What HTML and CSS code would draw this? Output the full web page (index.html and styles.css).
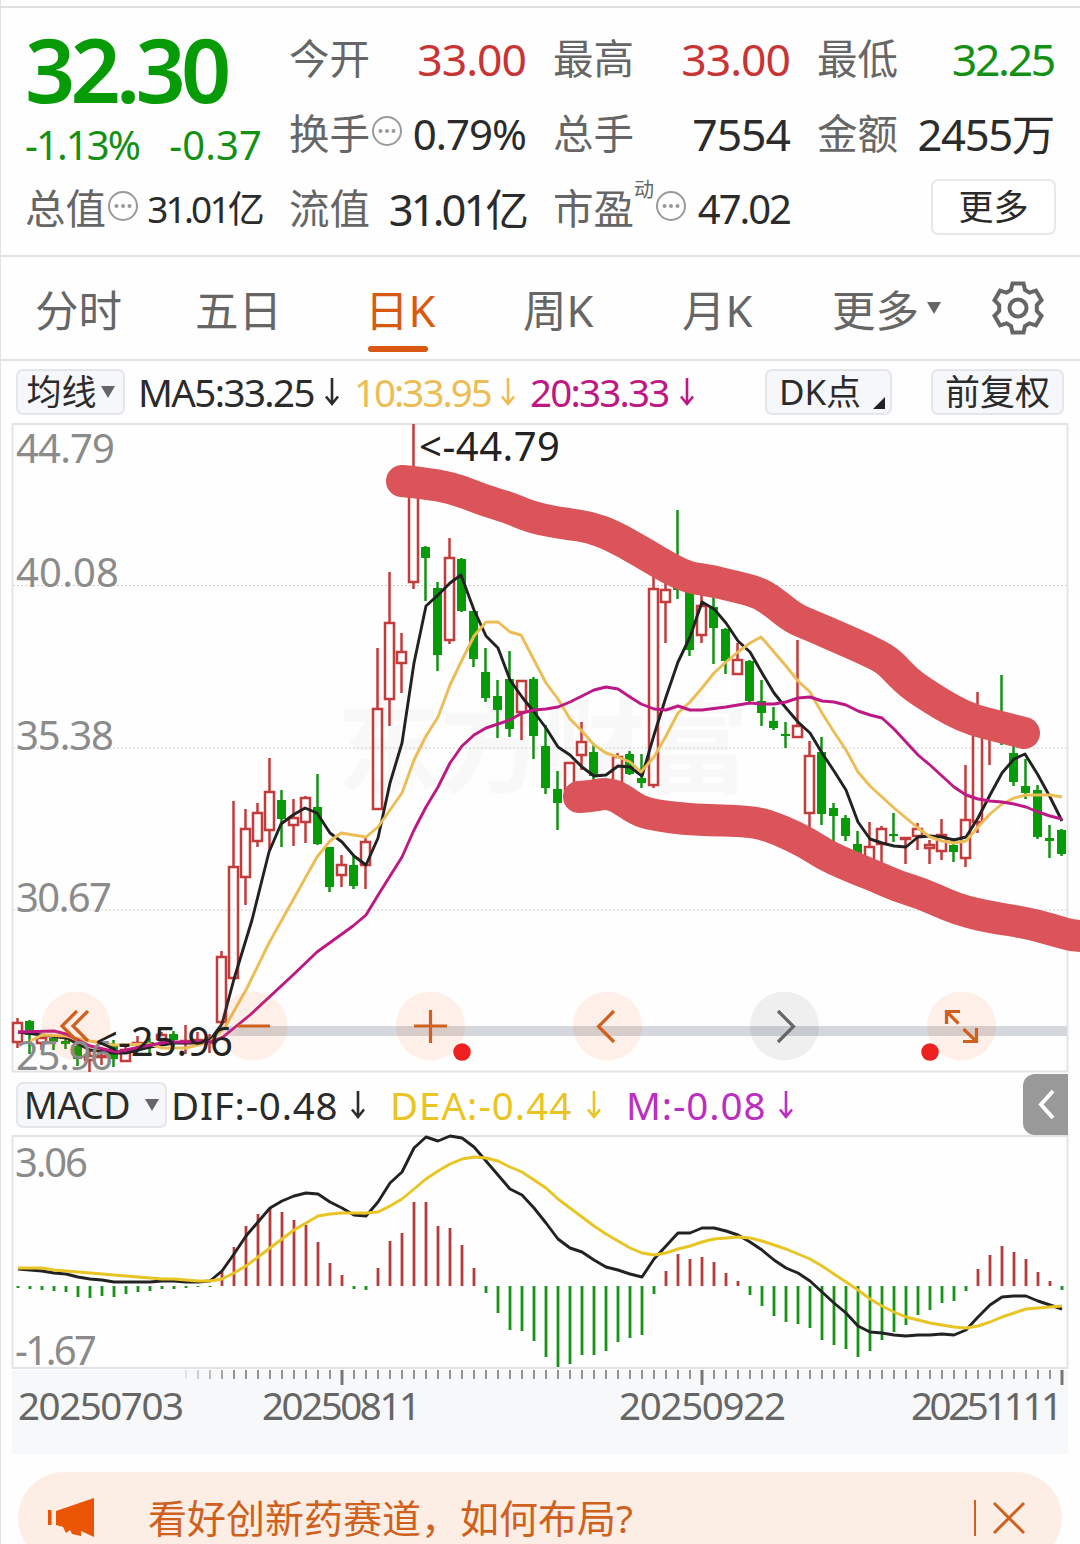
FILE: index.html
```
<!DOCTYPE html>
<html lang="zh-CN">
<head>
    <meta charset="UTF-8">
    <title>日K</title>
    <link rel="stylesheet" href="styles.css">
</head>
<body>
    <svg class="defs">
        <symbol id="dots" viewBox="0 0 32 32">
            <circle cx="16" cy="16" r="14" fill="none" stroke="#9a9a9a" stroke-width="2"/>
            <g fill="#999"><circle cx="9.5" cy="16" r="2"/><circle cx="16" cy="16" r="2"/><circle cx="22.5" cy="16" r="2"/></g>
        </symbol>
        <symbol id="down" viewBox="0 0 16 30">
            <path d="M8 1V27M2 19.5L8 27L14 19.5" fill="none" stroke="currentColor" stroke-width="2.6"/>
        </symbol>
    </svg>

    <div class="quote">
        <div class="main">
            <div class="price">32.30</div>
            <div class="change"><span>-1.13%</span><span class="diff">-0.37</span></div>
            <div class="cell"><label>总值</label><svg class="dots"><use href="#dots"/></svg><b class="small">31.01亿</b></div>
        </div>
        <div class="cell"><label>今开</label><b class="up">33.00</b></div>
        <div class="cell"><label>最高</label><b class="up">33.00</b></div>
        <div class="cell"><label>最低</label><b class="down">32.25</b></div>
        <div class="cell"><label>换手</label><svg class="dots"><use href="#dots"/></svg><b class="rate">0.79%</b></div>
        <div class="cell"><label>总手</label><b>7554</b></div>
        <div class="cell"><label>金额</label><b class="amount">2455万</b></div>
        <div class="cell"><label>流值</label><b class="float">31.01亿</b></div>
        <div class="cell"><label>市盈</label><sup>动</sup><svg class="dots"><use href="#dots"/></svg><b class="pe">47.02</b></div>
        <div class="cell end"><button class="more">更多</button></div>
    </div>

    <div class="tabs">
        <span>分时</span>
        <span>五日</span>
        <span class="active">日K</span>
        <span>周K</span>
        <span>月K</span>
        <span>更多<i class="caret"></i></span>
        <svg class="gear" viewBox="0 0 54 54">
            <path d="M21.500 2.500h11l1.500 6.500l4.500 2.700l6.500-2l5.500 9.500l-4.700 4.800v6l4.700 4.800l-5.500 9.500l-6.500-2l-4.500 2.700l-1.500 6.500h-11l-1.500-6.500l-4.500-2.700l-6.500 2l-5.500-9.500l4.700-4.800v-6l-4.700-4.800l5.500-9.500l6.500 2l4.500-2.700z"/>
            <circle cx="27" cy="27" r="8.500"/>
        </svg>
    </div>

    <div class="indicators">
        <button class="tag ma">均线<i class="caret"></i></button>
        <span class="ma5">MA5:33.25</span><svg class="arrow"><use href="#down"/></svg>
        <span class="ma10">10:33.95</span><svg class="arrow c10"><use href="#down"/></svg>
        <span class="ma20">20:33.33</span><svg class="arrow c20"><use href="#down"/></svg>
        <button class="tag dk">DK点<i class="corner"></i></button>
        <button class="tag fq">前复权</button>
    </div>

    <svg class="kline" viewBox="0 420 1080 656">
        <text x="337" y="785" class="watermark" textLength="412">东方财富</text>
        <path class="grid" d="M13 585.500H1067M13 748H1067M13 910H1067"/>
        <path class="frame" d="M12.500 424H1067.500V1071.500H12.500Z"/>
        <defs>
            <linearGradient id="fade"><stop offset="0" stop-color="#d4d7dc" stop-opacity="0"/><stop offset="0.04" stop-color="#d4d7dc"/></linearGradient>
        </defs>
        <rect x="205" y="1026" width="862" height="10" fill="url(#fade)"/>
        <g id="candles"></g>
        <g id="averages"></g>
        <g class="controls">
            <circle cx="76" cy="1026" r="34.500"/>
            <circle cx="253" cy="1026" r="34.500"/>
            <circle cx="430.500" cy="1026" r="34.500"/>
            <circle cx="607.500" cy="1026" r="34.500"/>
            <circle cx="784.500" cy="1026" r="34.500" class="off"/>
            <circle cx="961.500" cy="1026" r="34.500"/>
            <path d="M77 1011L62 1026L77 1041M88 1011L73 1026L88 1041"/>
            <path d="M238 1026H270M414 1026H447M430.500 1010V1043"/>
            <path d="M614 1011L598.500 1026.500L614 1042"/>
            <path class="gray" d="M778 1011L793.500 1026.500L778 1042"/>
            <path d="M946.500 1024V1011.500H960M947 1012L958.500 1023.500M963 1041.500H976.500V1028M976 1041L963.500 1029"/>
        </g>
        <circle cx="462" cy="1052" r="8.800" fill="#ef2020"/>
        <circle cx="930" cy="1052" r="8.800" fill="#ef2020"/>
        <g class="axis">
            <text x="16" y="463" textLength="99">44.79</text>
            <text x="16" y="587" textLength="103">40.08</text>
            <text x="16" y="750" textLength="98">35.38</text>
            <text x="16" y="912" textLength="96">30.67</text>
            <text x="16" y="1070" textLength="97">25.96</text>
        </g>
        <g class="mark">
            <text x="419" y="461" textLength="141">&lt;-44.79</text>
            <text x="95" y="1056" textLength="138">&lt;-25.96</text>
        </g>
        <g id="brush"></g>
    </svg>

    <div class="indicators macd-bar">
        <button class="tag macd">MACD<i class="caret"></i></button>
        <span class="dif">DIF:-0.48</span><svg class="arrow"><use href="#down"/></svg>
        <span class="dea">DEA:-0.44</span><svg class="arrow cdea"><use href="#down"/></svg>
        <span class="m">M:-0.08</span><svg class="arrow cm"><use href="#down"/></svg>
        <div class="fold"><svg viewBox="0 0 45 61"><path d="M30 17L18 30.500L30 44"/></svg></div>
    </div>

    <svg class="macd-chart" viewBox="0 1134 1080 236">
        <path class="frame" d="M12.500 1136H1067.500V1368H12.500Z"/>
        <g class="axis">
            <text x="15" y="1177" textLength="73">3.06</text>
            <text x="15" y="1365" textLength="82">-1.67</text>
        </g>
        <g id="macd"></g>
    </svg>

    <div class="dates">
        <svg viewBox="12 1370 1056 84">
            <g id="ticks"></g>
            <text x="18" y="1420" textLength="166">20250703</text>
            <text x="262" y="1420" textLength="159">20250811</text>
            <text x="619" y="1420" textLength="167">20250922</text>
            <text x="911" y="1420" textLength="152">20251111</text>
        </svg>
    </div>

    <div class="notice">
        <svg class="horn" viewBox="0 0 48 42"><path d="M0 13h3.500v15H0zM8 14L46 1V40L33 34V39L24 37L22 33L18 36L15 30L8 28Z"/></svg>
        <p>看好创新药赛道，如何布局?</p>
        <i class="bar"></i>
        <svg class="close" viewBox="0 0 32 32"><path d="M1 1L31 31M31 1L1 31"/></svg>
    </div>

    <script>
        // one row per day: up(1)/down(0), high, body top, body bottom, low
        const days = [
            [1,1018,1023,1042,1048],[0,1020,1021,1035,1054],[1,1037,1038,1043,1050],[0,1036,1038,1042,1050],
            [0,1037,1041,1044,1049],[0,1044,1046,1059,1066],[1,1050,1056,1060,1072],[1,1053,1056,1057,1065],
            [0,1040,1044,1059,1067],[1,1046,1050,1061,1061],[1,1036,1043,1044,1050],[0,1038,1042,1048,1053],
            [1,1032,1035,1039,1045],[0,1031,1034,1040,1047],[1,1025,1041,1043,1054],[1,1032,1040,1042,1046],
            [1,1034,1041,1043,1053],[1,951,957,1022,1024],[1,801,867,978,979],[1,809,829,877,905],
            [1,803,813,841,847],[1,758,792,830,850],[0,790,800,819,847],[1,799,818,825,846],
            [1,796,798,822,843],[0,774,807,844,845],[0,847,847,887,892],[1,855,865,875,887],
            [0,855,865,886,889],[1,838,842,865,889],[1,648,709,809,809],[1,572,623,699,726],
            [1,633,652,663,693],[1,424,480,582,589],[0,546,547,558,601],[0,582,588,655,671],
            [1,538,558,640,644],[0,558,559,611,612],[0,611,611,659,667],[0,648,672,698,702],
            [0,680,696,710,738],[0,651,679,729,737],[1,681,681,712,740],[0,677,679,736,759],
            [0,725,746,788,794],[0,771,789,803,830],[1,763,763,795,795],[1,722,742,755,770],
            [0,743,752,776,780],[1,785,788,790,792],[1,753,757,785,790],[0,751,754,774,775],
            [0,754,778,783,788],[1,575,589,785,788],[1,583,590,602,643],[0,510,575,590,599],
            [0,585,588,650,656],[1,595,606,635,643],[0,596,607,628,664],[0,628,629,661,674],
            [1,643,660,674,675],[0,660,661,701,702],[0,680,701,713,726],[0,707,721,728,730],
            [0,722,734,736,748],[1,640,726,737,737],[1,741,756,813,830],[0,737,752,814,825],
            [0,803,808,816,845],[0,815,818,836,841],[0,831,844,856,858],[1,822,847,862,866],
            [1,826,829,844,864],[0,813,834,836,842],[1,838,838,839,864],[1,823,829,836,850],
            [1,840,845,848,864],[1,819,835,851,860],[0,838,845,852,862],[1,765,820,858,867],
            [1,692,735,822,833],[1,720,725,735,765],[0,675,720,740,745],[0,746,753,782,786],
            [0,759,786,793,799],[0,785,790,837,839],[0,825,838,841,858],[0,829,830,854,856]
        ];

        const ma5 = '18,1032 42,1035 66,1038 78,1044 90,1050 114,1053 126,1053 138,1050 150,1047 174,1043 198,1043 210,1040 222,1024 234,979 252,920 269,852 281,824 293,815 305,808 317,813 330,833 342,842 354,856 366,865 378,838 390,783 402,743 414,663 426,606 438,595 450,583 461,575 474,610 486,636 498,648 510,680 522,697 534,712 546,728 558,747 570,755 582,767 594,776 606,775 618,766 630,767 642,776 654,735 666,697 678,662 690,637 702,602 714,609 726,623 738,641 750,652 762,673 774,693 786,708 798,722 810,733 822,753 834,771 846,790 858,822 870,839 882,843 894,846 906,847 918,837 930,836 942,837 954,840 966,837 978,818 990,795 1002,773 1014,759 1025,754 1038,775 1050,797 1062,821';
        const ma10 = '30,1041 42,1035 66,1036 90,1041 114,1045 150,1044 162,1048 186,1048 210,1042 225,1027 247,988 269,943 293,900 317,857 330,841 341,833 366,837 378,827 402,793 414,760 426,736 438,717 450,685 462,660 474,636 486,622 498,622 510,632 521,635 534,660 546,683 558,699 570,719 582,731 594,745 606,753 618,757 630,762 641,772 654,757 666,736 678,713 690,702 702,688 714,673 726,662 738,652 750,643 761,637 774,652 786,666 798,681 810,692 822,713 834,732 846,750 858,772 870,786 882,797 894,808 906,818 918,828 930,837 942,841 954,843 966,841 978,827 990,814 1002,804 1014,798 1026,795 1050,795 1062,797';
        const ma20 = '18,1032 54,1031 66,1034 78,1040 90,1046 117,1052 140,1047 167,1042 210,1042 223,1037 250,1015 293,975 317,952 353,926 366,915 380,892 402,857 414,830 426,807 438,787 450,763 462,746 474,735 486,728 498,724 510,720 522,713 534,710 546,709 558,707 570,702 582,696 594,690 606,687 618,689 630,697 641,704 654,709 666,710 678,706 690,710 702,710 726,707 750,703 762,704 774,704 786,702 798,698 810,697 822,701 834,702 846,705 858,711 870,715 882,718 894,729 918,755 930,765 942,776 954,787 966,795 978,799 990,801 1002,802 1014,804 1026,807 1038,812 1050,816 1062,819';

        const hist = [1288,1289,1290,1291,1292,1297,1298,1296,1297,1294,1292,1291,1289,1289,1288,1287,1287,1272,1247,1226,1214,1208,1212,1220,1225,1242,1263,1275,1289,1290,1268,1241,1233,1202,1202,1226,1228,1245,1268,1293,1313,1330,1331,1341,1357,1367,1364,1355,1355,1351,1342,1338,1335,1294,1271,1254,1259,1257,1262,1273,1281,1295,1306,1316,1322,1324,1328,1340,1345,1349,1357,1351,1340,1332,1325,1315,1310,1303,1301,1291,1269,1255,1246,1252,1259,1272,1281,1290];
        const dif = [1269,1270,1271,1273,1274,1277,1279,1280,1282,1282,1282,1282,1281,1281,1282,1282,1281,1271,1254,1236,1222,1208,1201,1196,1193,1194,1202,1208,1215,1216,1202,1183,1172,1148,1137,1141,1136,1138,1147,1161,1175,1189,1195,1208,1223,1239,1248,1252,1260,1267,1270,1274,1277,1259,1246,1233,1233,1228,1228,1231,1235,1242,1250,1260,1268,1273,1281,1292,1303,1313,1326,1332,1333,1335,1336,1335,1335,1334,1335,1330,1317,1305,1297,1296,1296,1301,1305,1309];
        const dea = [1268,1268,1268,1270,1271,1272,1273,1274,1275,1276,1277,1278,1279,1279,1280,1281,1281,1279,1273,1266,1257,1248,1239,1230,1223,1216,1214,1213,1213,1213,1212,1206,1199,1189,1179,1171,1164,1159,1157,1158,1161,1167,1172,1180,1188,1199,1208,1217,1226,1234,1241,1248,1253,1255,1253,1249,1246,1242,1239,1238,1237,1238,1241,1245,1249,1254,1259,1266,1274,1282,1290,1299,1306,1312,1317,1320,1323,1325,1327,1328,1326,1322,1317,1313,1309,1308,1307,1306];

        const upper = [[402,481],[423,483],[453,488],[483,500],[510,508],[533,518],[567,524],[590,527],[613,536],[640,551],[670,569],[690,578],[707,580],[733,586],[757,592],[772,601],[793,618],[810,625],[840,638],[865,649],[887,660],[900,674],[913,686],[933,699],[953,711],[973,720],[997,726],[1024,733]];
        const lower = [[579,797],[593,796],[607,793],[620,798],[637,810],[653,815],[693,820],[753,821],[780,830],[807,843],[827,856],[857,869],[877,877],[897,886],[923,894],[947,905],[967,912],[990,917],[1027,923],[1053,930],[1073,936],[1090,936]];

        const x = i => 18 + i * 12;
        const line = (points, color, w) => `<polyline points="${points}" fill="none" stroke="${color}" stroke-width="${w}" stroke-linejoin="round"/>`;
        const series = values => values.map((v, i) => `${x(i)},${v}`).join(' ');

        let out = '';
        days.forEach(([up, high, top, bottom, low], i) => {
            const cx = x(i) - 0.5;
            if (up) {
                out += `<path class="up-line" d="M${cx} ${high}V${top}M${cx} ${bottom}V${low}M${cx - 4.5} ${top}h9V${bottom}h-9Z"/>`;
            } else {
                out += `<path class="down-line" d="M${cx} ${high}V${low}"/><rect x="${cx - 4.5}" y="${top}" width="9" height="${bottom - top}" fill="#089b08"/>`;
            }
        });
        document.getElementById('candles').innerHTML = out;

        document.getElementById('averages').innerHTML =
            line(ma5, '#222', 2.9) + line(ma10, '#edbd55', 2.9) + line(ma20, '#bd1883', 2.9);

        out = '';
        hist.forEach((v, i) => {
            out += `<path d="M${x(i)} 1286V${v}" stroke="${v < 1286 ? '#b83a3a' : '#159415'}" stroke-width="2.8"/>`;
        });
        document.getElementById('macd').innerHTML = out + line(series(dif), '#222', 2.9) + line(series(dea), '#e8c522', 2.9);

        out = '';
        for (let i = 14; i < 88; i++) {
            const major = i === 27 || i === 57 || i === 87;
            const opacity = Math.min(1, (i - 13) / 5);
            out += `<path d="M${x(i)} 1370V${major ? 1385 : 1379}" stroke="#777" stroke-width="${major ? 3 : 1.6}" opacity="${opacity}"/>`;
        }
        document.getElementById('ticks').innerHTML = out;

        function smooth(points) {
            let d = `M${points[0]}`;
            for (let i = 1; i < points.length - 1; i++) {
                const [a, b] = points[i];
                const [c, e] = points[i + 1];
                d += `Q${a} ${b} ${(a + c) / 2} ${(b + e) / 2}`;
            }
            return d + `L${points[points.length - 1]}`;
        }
        document.getElementById('brush').innerHTML = `<path d="${smooth(upper)}"/><path d="${smooth(lower)}"/>`;
    </script>
</body>
</html>
```
FILE: styles.css
```
* {
    box-sizing: border-box;
}
body {
    margin: 0;
    width: 1080px;
    height: 1544px;
    overflow: hidden;
    background-color: #fefefe;
    border-left: 1px solid #e2e2e2;
    font-family: "Noto Sans", "Noto Sans CJK SC", sans-serif;
    color: #2b2b2b;
}
svg {
    display: block;
    flex: none;
    overflow: visible;
}
.defs {
    display: none;
}
button {
    font-family: inherit;
    color: inherit;
    padding: 0;
}
.quote {
    height: 251px;
    margin-top: 6px;
    padding: 13px 24px 0 24px;
    border-top: 2px solid #e0e0e0;
    border-bottom: 2px solid #e2e2e2;
    display: grid;
    grid-template-columns: 237px 237px 237px 237px;
    grid-template-rows: 75px 75px 75px;
    column-gap: 27px;
}
.main {
    grid-row: 1 / 4;
    display: grid;
    grid-template-rows: 97px 53px 75px;
}
.price {
    font-size: 88px;
    font-weight: 600;
    line-height: 96px;
    letter-spacing: -4.8px;
    color: #089b08;
}
.change {
    display: flex;
    justify-content: space-between;
    font-size: 40px;
    line-height: 53px;
    letter-spacing: -1.9px;
    color: #149014;
}
.change .diff {
    letter-spacing: 0.1px;
}
.cell {
    display: flex;
    align-items: center;
    white-space: nowrap;
    line-height: 74px;
}
.cell label {
    font-size: 40.5px;
    color: #666;
}
.cell b {
    margin-left: auto;
    font-size: 44.5px;
    font-weight: 400;
    letter-spacing: -1px;
}
.cell .small {
    font-size: 37px;
    letter-spacing: -2.8px;
}
.cell .rate {
    font-size: 42px;
}
.cell .amount {
    font-size: 43.5px;
    letter-spacing: -1.3px;
}
.cell .float {
    font-size: 43.5px;
    letter-spacing: -2.9px;
}
.cell .pe {
    font-size: 40px;
    letter-spacing: -2px;
}
.cell .up {
    color: #c93434;
}
.cell .down {
    color: #149014;
    letter-spacing: -2.3px;
}
.cell sup {
    font-size: 20px;
    line-height: 20px;
    color: #666;
    align-self: flex-start;
    margin-top: 9px;
}
.dots {
    width: 32px;
    height: 32px;
    margin-left: 1px;
    margin-bottom: 6px;
}
.end {
    justify-content: flex-end;
}
.more {
    width: 125px;
    height: 56px;
    margin-right: -2px;
    margin-bottom: 4px;
    font-size: 35px;
    line-height: 50px;
    background-color: #fff;
    border: 2px solid #e6e8ea;
    border-radius: 7px;
}
.tabs {
    height: 104px;
    padding-left: 34px;
    border-bottom: 2px solid #e2e2e2;
    display: grid;
    grid-template-columns: 160px 170px 158px 159px 150px 159px 54px;
    font-size: 43.5px;
    line-height: 106px;
    color: #666;
}
.tabs span {
    display: flex;
    align-items: center;
    height: 106px;
}
.tabs .active {
    color: #d8590f;
    position: relative;
}
.tabs .active::after {
    content: "";
    position: absolute;
    left: 3px;
    bottom: 11px;
    width: 60px;
    height: 6px;
    border-radius: 3px;
    background-color: #d8590f;
}
.caret {
    border: 7px solid transparent;
    border-top: 12px solid #666;
    border-bottom: 0;
}
.tabs .caret {
    border-width: 12px 7.5px 0;
    margin-left: 8px;
    margin-bottom: 4px;
}
.gear {
    width: 54px;
    height: 54px;
    margin-top: 24px;
    fill: none;
    stroke: #666;
    stroke-width: 4;
}
.indicators {
    height: 59px;
    padding-top: 2px;
    padding-left: 15px;
    display: flex;
    align-items: center;
    font-size: 38.5px;
    line-height: 56px;
    white-space: nowrap;
}
.tag {
    height: 46px;
    display: flex;
    align-items: center;
    justify-content: center;
    font-size: 35px;
    line-height: 42px;
    background-color: #f6f7fa;
    border: 2px solid #e4e6ea;
    border-radius: 7px;
    flex: none;
}
.ma {
    width: 109px;
    margin-right: 13px;
}
.ma .caret {
    margin-left: 4px;
}
.ma5 {
    width: 186px;
    letter-spacing: -1.6px;
}
.ma10 {
    width: 146px;
    color: #edbd55;
    letter-spacing: -2px;
}
.ma20 {
    width: 149px;
    color: #bd1883;
    letter-spacing: -1.8px;
}
.arrow {
    width: 16px;
    height: 30px;
    margin-right: 14px;
}
.c10 {
    color: #edbd55;
}
.c20 {
    color: #bd1883;
}
.dk {
    width: 127px;
    margin-left: 56px;
    margin-right: 39px;
    position: relative;
    padding-right: 17px;
}
.corner {
    position: absolute;
    right: 5px;
    bottom: 4px;
    border-left: 12px solid transparent;
    border-bottom: 12px solid #222;
}
.fq {
    width: 133px;
}
.kline {
    width: 1080px;
    height: 656px;
    margin-left: -1px;
}
.grid {
    stroke: #ccc;
    stroke-width: 1.2;
    stroke-dasharray: 2 2;
}
.frame {
    fill: none;
    stroke: #e3e3e3;
    stroke-width: 2;
}
.watermark {
    font-size: 104px;
    font-weight: 700;
    fill: #f8f8f8;
}
.up-line {
    fill: none;
    stroke: #c43b3b;
    stroke-width: 2.5;
}
.down-line {
    stroke: #149014;
    stroke-width: 2.5;
}
.controls circle {
    fill: rgba(255, 110, 40, 0.1);
}
.controls .off {
    fill: rgba(0, 0, 0, 0.06);
}
.controls path {
    fill: none;
    stroke: #d0601e;
    stroke-width: 3.2;
}
.controls .gray {
    stroke: #666;
}
.axis text {
    font-size: 40px;
    fill: #8b8b8b;
}
.mark text {
    font-size: 40px;
    fill: #222;
}
#brush path {
    fill: none;
    stroke: #da5459;
    stroke-width: 32;
    stroke-linecap: round;
    stroke-linejoin: round;
}
.macd-bar {
    height: 58px;
    padding-top: 0;
    padding-left: 15px;
    position: relative;
}
.macd {
    width: 151px;
    font-size: 37.5px;
    margin-right: 4px;
    letter-spacing: -0.5px;
}
.macd .caret {
    margin-left: 15px;
}
.dif {
    width: 179px;
    letter-spacing: 0.8px;
}
.dea {
    width: 196px;
    color: #e8c522;
    letter-spacing: 1px;
}
.cdea {
    color: #e8c522;
}
.m {
    width: 152px;
    color: #bb2fc0;
    letter-spacing: 0.9px;
}
.macd-bar .arrow {
    margin-right: 24px;
}
.cm {
    color: #bb2fc0;
}
.fold {
    position: absolute;
    right: 12px;
    top: -2px;
    width: 45px;
    height: 61px;
    background-color: #999;
    border-radius: 12px 0 0 12px;
}
.fold path {
    fill: none;
    stroke: #fff;
    stroke-width: 4;
}
.macd-chart {
    width: 1080px;
    height: 236px;
    margin-left: -1px;
}
.dates {
    width: 1056px;
    height: 84px;
    margin-left: 11px;
    background-color: #f7f8fa;
}
.dates text {
    font-size: 38.5px;
    fill: #666;
}
.notice {
    height: 92px;
    margin: 18px 18px 0 17px;
    padding: 0 37px 0 30px;
    display: flex;
    align-items: center;
    background-color: #fceee4;
    border-radius: 46px;
    color: #d0601e;
}
.horn {
    width: 48px;
    height: 42px;
    fill: #ea5504;
}
.notice p {
    flex: 1;
    margin: 0 0 0 52px;
    font-size: 39px;
    line-height: 90px;
}
.bar {
    width: 2px;
    height: 36px;
    margin-right: 17px;
    background-color: #d0601e;
}
.close {
    width: 32px;
    height: 32px;
    fill: none;
    stroke: #d0601e;
    stroke-width: 3;
}
```
